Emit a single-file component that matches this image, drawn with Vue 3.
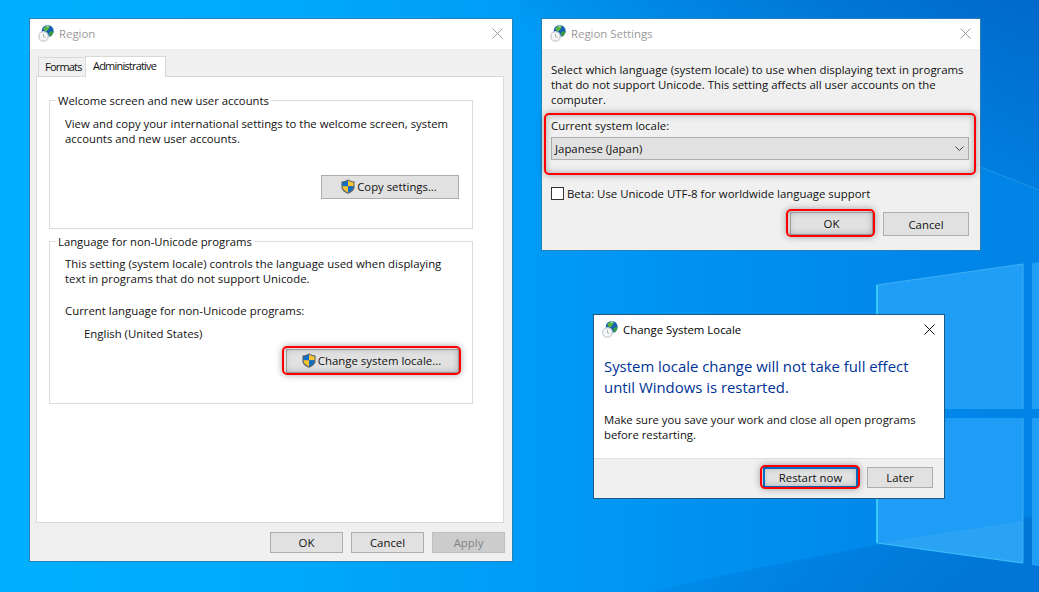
<script setup>
const groupOne = ['View and copy your international settings to the welcome screen, system', 'accounts and new user accounts.']
const groupTwo = ['This setting (system locale) controls the language used when displaying', 'text in programs that do not support Unicode.']
const intro = ['Select which language (system locale) to use when displaying text in programs', 'that do not support Unicode. This setting affects all user accounts on the', 'computer.']
</script>

<template>
  <div class="desktop">
    <svg class="wallpaper" width="1039" height="592" viewBox="0 0 1039 592">
      <defs>
        <linearGradient id="bg" x1="0" y1="0.5" x2="1" y2="0.5">
          <stop offset="0" stop-color="#00b0ff" />
          <stop offset="0.3" stop-color="#00a8fb" />
          <stop offset="0.58" stop-color="#0097f3" />
          <stop offset="0.85" stop-color="#0088ea" />
          <stop offset="1" stop-color="#0084e6" />
        </linearGradient>
        <linearGradient id="shade" x1="0.35" y1="0.55" x2="1" y2="0">
          <stop offset="0" stop-color="#0060c0" stop-opacity="0" />
          <stop offset="1" stop-color="#0060c0" stop-opacity="0.75" />
        </linearGradient>
        <linearGradient id="floor" x1="0" y1="0" x2="1" y2="0.3">
          <stop offset="0" stop-color="#0070d0" stop-opacity="0" />
          <stop offset="1" stop-color="#0070d0" stop-opacity="0.7" />
        </linearGradient>
        <symbol id="globe" viewBox="0 0 16 17">
          <circle cx="9.7" cy="6" r="6" fill="#175fb4" />
          <path d="M5.500 3.200C6.700 1 9 .2 11 .5c1.200.7.900 2.300-.3 3-.4 1.400-1.500 2.600-2.800 3-1.300-.5-2.500-1.900-2.400-3.300z" fill="#5ab53f" />
          <path d="M11.500 6.800c1.200-.6 2.700-.8 4-.4-.2 2.200-1.500 4.200-3.400 5-1-1.400-1.200-3.300-.6-4.600z" fill="#3c9e3a" />
          <path d="M7.600 1.100c1.200-.7 2.700-.8 3.800-.3-.3.800-1.900 1.300-3.800.3z" fill="#bfeaf8" />
          <circle cx="5.500" cy="11.500" r="5.400" fill="#cdd2d6" />
          <circle cx="5.500" cy="11.500" r="4" fill="#f6f7f8" />
          <path d="M5.500 8.800v2.900l2 .8" fill="none" stroke="#9a9ea2" stroke-width="0.8" />
        </symbol>
        <symbol id="shield" viewBox="0 0 14 15">
          <path d="M7 .2C5.300 1.600 3.100 2.300.4 2.400v5.400c0 3.300 2.600 5.700 6.600 7 4-1.300 6.600-3.700 6.600-7V2.400C10.900 2.300 8.700 1.600 7 .2z" fill="#62676d" />
          <path d="M7 1.500C5.500 2.700 3.700 3.300 1.500 3.400v3.900H7z" fill="#0f6fc6" />
          <path d="M7 1.500c1.500 1.200 3.300 1.800 5.500 1.900v3.900H7z" fill="#f5c431" />
          <path d="M1.500 7.300c.1 2.800 2.300 4.900 5.500 6.200V7.300z" fill="#f5c431" />
          <path d="M12.500 7.300c-.1 2.800-2.300 4.900-5.500 6.200V7.300z" fill="#0f6fc6" />
        </symbol>
      </defs>
      <rect width="1039" height="592" fill="url(#bg)" />
      <path d="M520 0H1039V190L980 167C860 125 700 100 520 90z" fill="url(#shade)" />
      <path d="M1039 515C880 545 760 565 650 592H1039z" fill="url(#floor)" />
      <path d="M877 285L1023 264V409H877z" fill="#209ef6" />
      <path d="M877 418H1023V563L877 543z" fill="#1f9cf5" />
      <path d="M877 543L1023 521V563z" fill="#2aa3f5" />
      <path d="M1032 263L1039 262V409H1032zM1032 418H1039V566L1032 565z" fill="#209ef6" />
      <path d="M877 285L1023 264V409M1023 418V563" fill="none" stroke="#3fb0f4" stroke-width="1" />
      <path d="M877 285V409M877 418V543" fill="none" stroke="#42dcf8" stroke-width="1.500" />
      <path d="M877 543L1023 563" fill="none" stroke="#38bdf6" stroke-width="1.200" />
      <path d="M980 167L1039 190" fill="none" stroke="#2f9fe8" stroke-width="1" opacity="0.7" />
    </svg>

    <section class="window region">
      <header class="titlebar inactive">
        <svg class="app-icon"><use href="#globe" /></svg>
        <span>Region</span>
        <svg class="close" viewBox="0 0 11 11"><path d="M.5.500l10 10M10.500.500l-10 10" /></svg>
      </header>
      <div class="region-body">
        <div class="tabs">
          <div class="tab">Formats</div>
          <div class="tab selected">Administrative</div>
        </div>
        <div class="tab-panel">
          <div class="group group-one">
            <div class="legend">Welcome screen and new user accounts</div>
            <p v-for="line in groupOne" :key="line">{{ line }}</p>
            <div class="group-action copy-action">
              <button class="btn shield-btn copy-btn">
                <svg class="shield"><use href="#shield" /></svg>Copy settings...
              </button>
            </div>
          </div>
          <div class="group group-two">
            <div class="legend">Language for non-Unicode programs</div>
            <p v-for="line in groupTwo" :key="line">{{ line }}</p>
            <p class="current">Current language for non-Unicode programs:</p>
            <p class="language">English (United States)</p>
            <div class="group-action">
              <button class="btn shield-btn change-btn marked">
                <svg class="shield"><use href="#shield" /></svg>Change system locale...
              </button>
            </div>
          </div>
        </div>
        <div class="footer-buttons">
          <button class="btn wide">OK</button>
          <button class="btn wide">Cancel</button>
          <button class="btn wide disabled">Apply</button>
        </div>
      </div>
    </section>

    <section class="window settings">
      <header class="titlebar inactive">
        <svg class="app-icon"><use href="#globe" /></svg>
        <span>Region Settings</span>
        <svg class="close" viewBox="0 0 11 11"><path d="M.5.500l10 10M10.500.500l-10 10" /></svg>
      </header>
      <div class="settings-body">
        <p v-for="line in intro" :key="line">{{ line }}</p>
        <div class="locale-field">
          <p>Current system locale:</p>
          <div class="select">
            <span>Japanese (Japan)</span>
            <svg width="9" height="5" viewBox="0 0 9 5"><path d="M.5.500l4 4 4-4" fill="none" stroke="#444" /></svg>
          </div>
          <div class="field-mark"></div>
        </div>
        <label class="beta"><span class="checkbox"></span>Beta: Use Unicode UTF-8 for worldwide language support</label>
        <div class="settings-buttons">
          <button class="btn settings-ok marked">OK</button>
          <button class="btn settings-cancel">Cancel</button>
        </div>
      </div>
    </section>

    <section class="window restart">
      <header class="titlebar">
        <svg class="app-icon"><use href="#globe" /></svg>
        <span>Change System Locale</span>
        <svg class="close dark" viewBox="0 0 11 11"><path d="M.5.500l10 10M10.500.500l-10 10" /></svg>
      </header>
      <div class="restart-body">
        <h2>System locale change will not take full effect<br />until Windows is restarted.</h2>
        <p>Make sure you save your work and close all open programs</p>
        <p>before restarting.</p>
      </div>
      <div class="restart-footer">
        <button class="btn restart-now marked">Restart now</button>
        <button class="btn later">Later</button>
      </div>
    </section>
  </div>
</template>

<style>
html, body { margin: 0; overflow: hidden; }
</style>

<style scoped>
.desktop {
  position: relative;
  width: 1039px;
  height: 592px;
  overflow: hidden;
  font-family: "Open Sans", "Noto Sans", sans-serif;
  font-size: 11.4px;
  line-height: 15px;
  color: #111;
}
.wallpaper { position: absolute; left: 0; top: 0; }
p { margin: 0; white-space: nowrap; }

.window {
  position: absolute;
  box-sizing: border-box;
  display: flex;
  flex-direction: column;
  background: #f0f0f0;
  border: 1px solid #2b7fb8;
}
.region { left: 29px; top: 18px; width: 484px; height: 544px; }
.settings { left: 541px; top: 18px; width: 440px; height: 233px; }
.restart { left: 593px; top: 314px; width: 352px; height: 185px; border-color: #1d5b86; }

.titlebar {
  height: 30px;
  flex: none;
  display: flex;
  align-items: center;
  padding: 0 9px 0 8px;
  background: #fff;
  color: #000;
}
.titlebar.inactive { color: #9a9a9a; }
.titlebar span { margin: -2px 0 0 5px; flex: 1; }
.app-icon { width: 16px; height: 17px; flex: none; margin-top: -1px; }
.close { width: 11px; height: 11px; flex: none; margin-top: -1px; }
.close path { stroke: #9a9a9a; stroke-width: 1; fill: none; }
.close.dark path { stroke: #111; }

.region-body { flex: 1; display: flex; flex-direction: column; padding: 7px 7px 0 6px; }
.tabs { display: flex; padding-left: 2px; height: 20px; align-items: flex-end; }
.tab {
  box-sizing: border-box;
  height: 19px;
  width: 47px;
  padding-left: 6px;
  border: 1px solid #d9d9d9;
  border-bottom: none;
  border-right: none;
  background: #f0f0f0;
  line-height: 17px;
  font-size: 11px;
  letter-spacing: -0.8px;
  white-space: nowrap;
}
.tab.selected {
  width: 81px;
  height: 21px;
  margin-bottom: -1px;
  padding-left: 7px;
  border-right: 1px solid #d9d9d9;
  background: #fff;
  line-height: 18px;
  position: relative;
}
.tab-panel {
  box-sizing: border-box;
  width: 468px;
  height: 447px;
  padding: 23px 30px 0 12px;
  background: #fff;
  border: 1px solid #d9d9d9;
}
.group {
  position: relative;
  box-sizing: border-box;
  width: 424px;
  padding: 15px 13px 0 15px;
  border: 1px solid #dcdcdc;
}
.group-one { height: 129px; margin-bottom: 12px; font-size: 11.33px; }
.group-two { height: 163px; padding-top: 14px; }
.legend {
  position: absolute;
  left: 6px;
  top: -8px;
  padding: 0 2px;
  background: #fff;
  font-size: 11.3px;
}
.current { margin-top: 17px; }
.language { margin-top: 8px; padding-left: 19px; }
.group-action { display: flex; justify-content: flex-end; margin-top: 8px; }
.copy-action { margin-top: 29px; }

.btn {
  box-sizing: border-box;
  display: inline-flex;
  align-items: center;
  justify-content: center;
  padding: 0;
  background: #e1e1e1;
  border: 1px solid #adadad;
  font: inherit;
  color: #111;
  position: relative;
}
.wide { width: 73px; height: 21px; }
.disabled { background: #ccc; border-color: #bfbfbf; color: #838383; }
.shield { width: 14px; height: 15px; margin-right: 2px; }
.shield-btn { height: 24px; padding: 0 2px 2px 0; }
.shield-btn .shield { margin-top: 1px; }
.copy-btn { width: 138px; }
.change-btn { width: 173px; }
.footer-buttons { display: flex; justify-content: flex-end; gap: 8px; margin-top: 9px; }

.marked::after, .field-mark {
  content: "";
  position: absolute;
  border: 2px solid #f00;
  border-radius: 5px;
  box-shadow: 0 0 7px rgba(0, 0, 0, 0.35), inset 0 0 7px rgba(0, 0, 0, 0.3);
}
.marked::after { left: -5px; right: -3px; top: -4px; bottom: -3px; }
.field-mark { left: -7px; right: -7px; top: -5px; bottom: -15px; }

.settings-body { flex: 1; padding: 13px 11px 0 9px; }
.locale-field { position: relative; margin-top: 11px; }
.select {
  box-sizing: border-box;
  height: 23px;
  margin-top: 4px;
  padding: 0 4px 0 3px;
  display: flex;
  align-items: center;
  justify-content: space-between;
  background: #e1e1e1;
  border: 1px solid #adadad;
}
.beta { display: flex; align-items: center; margin-top: 26px; height: 14px; }
.checkbox {
  box-sizing: border-box;
  width: 13px;
  height: 13px;
  margin-right: 3px;
  background: #fff;
  border: 1px solid #333;
}
.settings-buttons { display: flex; justify-content: flex-end; align-items: flex-start; margin-top: 12px; }
.settings-ok { width: 83px; height: 23px; margin-right: 10px; }
.settings-cancel { width: 86px; height: 24px; }

.restart-body { flex: 1; background: #fff; padding: 11px 10px 0; font-size: 11.3px; }
h2 {
  margin: 0 0 14px;
  font-size: 14.9px;
  font-weight: 400;
  line-height: 21px;
  color: #003399;
}
.restart-footer {
  box-sizing: border-box;
  height: 40px;
  flex: none;
  display: flex;
  justify-content: flex-end;
  gap: 9px;
  padding: 8px 11px 0 0;
  border-top: 1px solid #dfdfdf;
}
.restart-now { width: 95px; height: 21px; border: 2px solid #0078d7; }
.restart-now.marked::after { left: -5px; right: -4px; top: -4px; bottom: -3px; }
.later { width: 66px; height: 21px; }
</style>
